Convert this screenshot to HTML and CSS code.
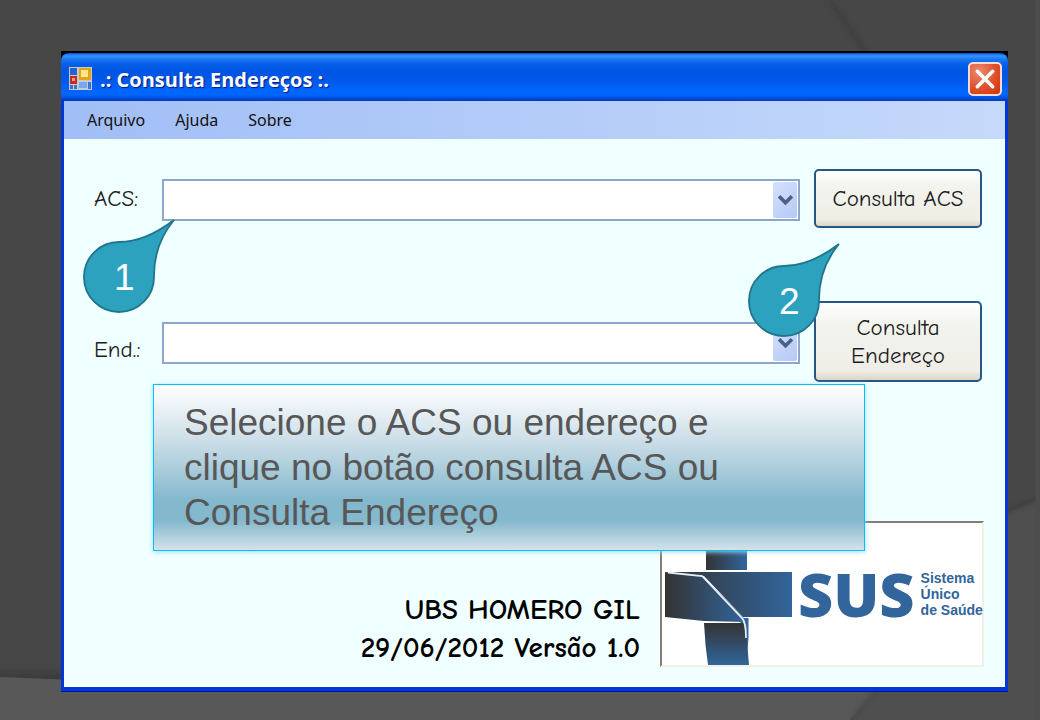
FILE: index.html
```html
<!DOCTYPE html>
<html lang="pt-BR">
<head>
<meta charset="utf-8">
<title>Consulta Endereços</title>
<link rel="stylesheet" href="styles.css">
</head>
<body>
<svg class="backdrop" viewBox="0 0 1040 720" preserveAspectRatio="none" aria-hidden="true">
  <defs>
    <linearGradient id="fold" x1="0" y1="0" x2="0" y2="1"><stop offset="0" stop-color="#474747"/><stop offset="0.9" stop-color="#464646"/><stop offset="1" stop-color="#393939"/></linearGradient>
    <filter id="soft"><feGaussianBlur stdDeviation="2"/></filter>
  </defs>
  <rect width="1040" height="720" fill="#474747"/>
  <path d="M0 560H80V680L0 677Z" fill="url(#fold)"/>
  <path d="M0 677L260 688L900 680L850 720H0Z" fill="#585858"/>
  <path d="M1040 498L940 540L876 692L852 720H1040Z" fill="#4f4f4f"/>
  <g fill="none" stroke="#3c3c3c" stroke-width="4" filter="url(#soft)">
    <path d="M830 0L867 54"/>
    <path d="M1044 496L1000 514"/>
  </g>
  <path d="M876 690L852 720" fill="none" stroke="#484848" stroke-width="4" filter="url(#soft)"/>
  <path d="M1038 0V720" stroke="#4d4d4d" stroke-width="5"/>
</svg>
<main class="slide">
  <section class="window">
    <header class="titlebar">
      <svg class="app-icon" viewBox="0 0 23 23" aria-hidden="true">
        <rect width="23" height="23" fill="#c5cad0"/>
        <rect x="1" y="1" width="7" height="7" fill="#2861d2"/>
        <rect x="1" y="9" width="7" height="8" fill="#c22b22"/>
        <rect x="3" y="11" width="3" height="3" fill="#f69a83"/>
        <rect x="10" y="1" width="12" height="12" fill="#e5a417"/>
        <rect x="12" y="3" width="7" height="7" fill="#ffe888"/>
        <path d="M1 18h3v4H1zM5 18h3v4H5zM19 15h3v7h-3z" fill="#3c71d7"/>
        <rect x="10" y="15" width="8" height="6" fill="#78a8f5"/>
      </svg>
      <h1 class="title">.: Consulta Endereços :.</h1>
      <button class="close" type="button" aria-label="Fechar">
        <svg viewBox="0 0 20 20" aria-hidden="true"><path d="M3 3L17 17M17 3L3 17" stroke="#fff" stroke-width="3.2" stroke-linecap="round"/></svg>
      </button>
    </header>
    <nav class="menu">
      <button type="button">Arquivo</button>
      <button type="button">Ajuda</button>
      <button type="button">Sobre</button>
    </nav>
    <form class="client">
      <div class="row">
        <label for="acs">ACS:</label>
        <span class="combo">
          <select id="acs"><option></option></select>
          <span class="drop"><svg viewBox="0 0 14 10" aria-hidden="true"><path d="M1 2L7 8L13 2" fill="none" stroke="#4a6185" stroke-width="3.4"/></svg></span>
        </span>
        <button class="push" type="button">Consulta ACS</button>
      </div>
      <div class="row row-tall">
        <label for="end">End.:</label>
        <span class="combo">
          <select id="end"><option></option></select>
          <span class="drop"><svg viewBox="0 0 14 10" aria-hidden="true"><path d="M1 2L7 8L13 2" fill="none" stroke="#4a6185" stroke-width="3.4"/></svg></span>
        </span>
        <button class="push" type="button">Consulta<br>Endereço</button>
      </div>
      <footer class="credits">
        <p class="version">UBS HOMERO GIL<br>29/06/2012 Versão 1.0</p>
        <div class="logo">
          <svg class="cross" viewBox="0 0 130 142" aria-hidden="true">
            <defs>
              <linearGradient id="bar"><stop offset="0" stop-color="#333"/><stop offset="1" stop-color="#31659b"/></linearGradient>
              <linearGradient id="stem" x1="0" y1="0" x2="0" y2="1"><stop offset="0" stop-color="#333"/><stop offset="1" stop-color="#31659b"/></linearGradient>
            </defs>
            <rect x="44" y="0" width="41" height="47" fill="url(#bar)"/>
            <path d="M3 49H130V94H81L42 53Z" fill="url(#bar)"/>
            <path d="M3 49L40 53L81 94L84 99L42 98L3 94Z" fill="url(#bar)"/>
            <path d="M78 95H86.500V115L84 142Z" fill="#31659b"/>
            <path d="M42 100H83.500L87 142H46Q43 122 42 100Z" fill="url(#stem)"/>
            <path d="M6 49.500L40 53L80 95Q84 99 84 115" fill="none" stroke="#e6edf5" stroke-width="1.800"/>
          </svg>
          <strong class="sus">SUS</strong>
          <span class="sus-name">Sistema<br>Único<br>de Saúde</span>
        </div>
      </footer>
    </form>
  </section>
  <div class="pin pin-one">
    <svg viewBox="0 0 94 96" aria-hidden="true"><path d="M91 2Q62 24 36 24A35 35 0 0 0 1 58A35 35 0 0 0 36 94A35 35 0 0 0 71 58Q71 26 91 2Z" fill="#2da2bf" stroke="#1f768b" stroke-width="1.800"/></svg>
    <span>1</span>
  </div>
  <div class="pin pin-two">
    <svg viewBox="0 0 94 96" aria-hidden="true"><path d="M91 2Q62 24 36 24A35 35 0 0 0 1 58A35 35 0 0 0 36 94A35 35 0 0 0 71 58Q71 26 91 2Z" fill="#2da2bf" stroke="#1f768b" stroke-width="1.800"/></svg>
    <span>2</span>
  </div>
  <p class="note">Selecione o ACS ou endereço e<br>clique no botão consulta ACS ou<br>Consulta Endereço</p>
</main>
</body>
</html>
```
FILE: styles.css
```css
* { box-sizing: border-box; }

body {
  margin: 0;
  background: #474747;
  font-family: "Liberation Sans", Arial, sans-serif;
}

button { font: inherit; color: inherit; }

.backdrop {
  position: fixed;
  inset: 0;
  width: 100%;
  height: 100%;
}

.slide {
  position: relative;
  min-height: 100vh;
  padding: 51px 32px 28px 61px;
  display: flex;
}

.window {
  flex: 1;
  display: flex;
  flex-direction: column;
  background: linear-gradient(#000 0 10px, #0036d8 10px);
  border-bottom: 1px solid #00148a;
}

.titlebar {
  display: flex;
  align-items: center;
  gap: 8px;
  height: 48px;
  margin-top: 2px;
  padding: 4px 6px 0 8px;
  border-radius: 8px 8px 0 0;
  background: linear-gradient(#0a50d8 0, #3594ff 3px, #1c78f4 6px, #0560e8 11px, #0054e3 18px, #0058ea 28px, #0066ff 38px, #0066ff 42px, #0048d0 46px, #0038bd 48px);
}

.app-icon { width: 23px; height: 23px; margin-bottom: 2px; }

.title {
  flex: 1;
  margin: 0;
  font-family: "Trebuchet MS", "Open Sans", sans-serif;
  font-size: 20px;
  font-weight: 700;
  color: #fff;
  text-shadow: 1px 1px 1px #0a1883;
}

.close {
  display: grid;
  place-items: center;
  width: 34px;
  height: 34px;
  padding: 0;
  border: 2px solid #f6dcd5;
  border-radius: 5px;
  background: radial-gradient(circle at 30% 25%, #ec8a70, #e0502b 55%, #cb3307);
}

.close svg { width: 22px; height: 22px; }

.menu {
  display: flex;
  gap: 30px;
  height: 38px;
  margin: 0 3px;
  padding: 0 23px;
  background: linear-gradient(90deg, #a1bef6, #c5d9fa);
}

.menu button {
  padding: 0;
  border: 0;
  background: none;
  font-family: Tahoma, "Noto Sans", sans-serif;
  font-size: 16px;
  color: #111;
}

.client {
  flex: 1;
  display: flex;
  flex-direction: column;
  margin: 0 3px 4px;
  padding: 30px 20px 19px 30px;
  background: #f0ffff;
  border-right: 1px solid #fff;
  border-bottom: 1px solid #fff;
  font-family: "Comic Sans MS", "Comic Neue", "Open Sans", sans-serif;
  font-size: 23px;
  color: #1c1c1c;
}

.row {
  display: grid;
  grid-template-columns: 68px 1fr 168px;
  align-items: center;
  min-height: 59px;
  margin: 0 2px 73px 0;
}

.row-tall { min-height: 81px; }
.row-tall label { padding-top: 16px; }

.combo { position: relative; margin: 2px 14px 0 0; }

.combo select {
  display: block;
  width: 100%;
  height: 42px;
  appearance: none;
  border: 2px solid #8ba8c8;
  border-radius: 0;
  background: #fff;
  font: inherit;
}

.drop {
  position: absolute;
  inset: 3px 3px 3px auto;
  width: 24px;
  display: grid;
  place-items: center;
  border-radius: 2px;
  background: linear-gradient(135deg, #d5e0fc, #b5c9f7);
  pointer-events: none;
}

.drop svg { width: 15px; height: 11px; }

.push {
  align-self: stretch;
  padding: 0;
  border: 2px solid #275687;
  border-radius: 5px;
  background: linear-gradient(#fff, #f4f4ef 25%, #eeede6 88%, #ddd5c7);
  line-height: 28px;
}

.credits {
  display: flex;
  justify-content: flex-end;
  align-items: flex-end;
  gap: 20px;
  margin-top: auto;
}

.version {
  margin: 0;
  text-align: right;
  font-size: 29px;
  font-weight: 700;
  line-height: 38px;
  color: #000;
}

.logo {
  display: flex;
  align-items: center;
  width: 324px;
  height: 146px;
  border: 2px solid;
  border-color: #827d70 #f5f0e4 #f5f0e4 #827d70;
  background: #fff;
  color: #31659b;
}

.cross { flex: none; width: 130px; height: 142px; }

.sus {
  margin-left: 6px;
  font-family: "Open Sans", sans-serif;
  font-size: 61px;
  font-weight: 800;
  line-height: 62px;
}

.sus-name {
  margin-left: 6px;
  font-family: "Liberation Sans", Arial, sans-serif;
  font-size: 14px;
  font-weight: 700;
  line-height: 16px;
  white-space: nowrap;
}

.pin {
  position: absolute;
  width: 94px;
  height: 96px;
  font-size: 37px;
  line-height: 42px;
  color: #fff;
}

.pin svg { display: block; width: 100%; height: 100%; }
.pin span { position: absolute; left: 31px; top: 39px; }
.pin-one { left: 83px; top: 218px; }
.pin-two { left: 748px; top: 242px; }

.note {
  position: absolute;
  left: 153px;
  right: 175px;
  top: 384px;
  margin: 0;
  padding: 15px 30px;
  border: 1px solid #00bfff;
  background: linear-gradient(#fff, #cfe0e9 32%, #84b8cd 70%, #84b8cd 82%, #d3e2ea);
  box-shadow: 0 1px 5px #9fdcf5;
  font-size: 37px;
  line-height: 45px;
  color: #575757;
}
```
